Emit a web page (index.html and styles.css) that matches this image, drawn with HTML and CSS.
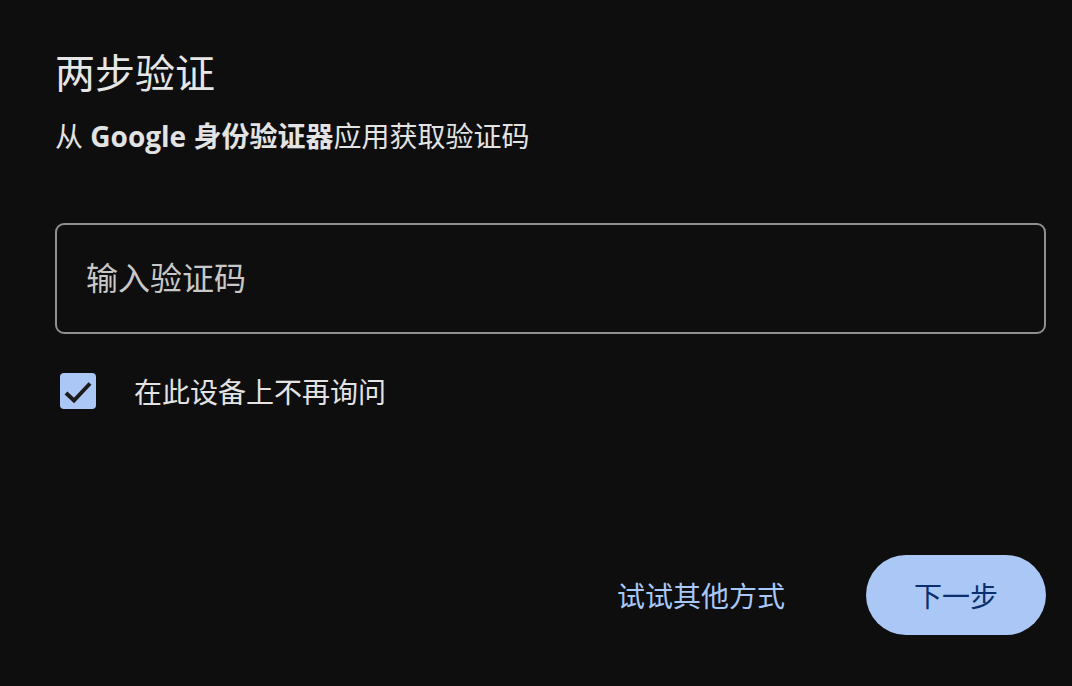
FILE: index.html
```html
<!DOCTYPE html>
<html lang="zh-CN">
<head>
    <meta charset="UTF-8">
    <meta name="viewport" content="width=device-width, initial-scale=1.0">
    <title>两步验证</title>
    <link rel="stylesheet" href="styles.css">
</head>
<body>
<div class="page">
    <h1 class="title">两步验证</h1>
    <p class="subtitle">从 <b>Google 身份验证器</b>应用获取验证码</p>

    <div class="code-field">
        <span class="placeholder">输入验证码</span>
    </div>

    <label class="remember">
        <span class="checkbox">
            <svg width="36" height="36" viewBox="0 0 36 36">
                <path d="M6 20 L14 27.5 L30 10.5" fill="none" stroke="#1c1c1c" stroke-width="4"/>
            </svg>
        </span>
        <span class="remember-text">在此设备上不再询问</span>
    </label>

    <div class="actions">
        <a class="link-btn">试试其他方式</a>
        <button class="next-btn">下一步</button>
    </div>
</div>
</body>
</html>
```

FILE: styles.css
```css
body {
    margin: 0;
    background-color: #0e0e0e;
    color: #e3e3e3;
    font-family: "Open Sans", "Noto Sans CJK SC", sans-serif;
}

.page {
    padding: 47px 26px 0 55px;
    display: flex;
    flex-direction: column;
}

.title {
    margin: 0;
    font-size: 40px;
    font-weight: 400;
    line-height: 52px;
    color: #e6e6e6;
}

.subtitle {
    margin: 19px 0 0 0;
    font-size: 28px;
    line-height: 36px;
    color: #e3e3e3;
}

.subtitle b {
    font-weight: 700;
}

.code-field {
    margin-top: 69px;
    width: 991px;
    height: 111px;
    border: 2px solid #8f8f8f;
    border-radius: 9px;
    display: flex;
    align-items: center;
    padding-left: 29px;
    box-sizing: border-box;
}

.placeholder {
    font-size: 32px;
    color: #c8c8c8;
    margin-bottom: 6px;
}

.remember {
    margin-top: 37px;
    margin-left: 5px;
    display: flex;
    align-items: center;
    gap: 38px;
}

.checkbox {
    width: 36px;
    height: 36px;
    border-radius: 4px;
    background-color: #abc7f6;
    display: flex;
}

.remember-text {
    font-size: 28px;
    color: #e3e3e3;
}

.actions {
    margin-top: 144px;
    display: flex;
    justify-content: flex-end;
    align-items: center;
}

.link-btn {
    font-size: 28px;
    color: #a8c7fa;
    margin-right: 81px;
    cursor: pointer;
}

.next-btn {
    width: 180px;
    height: 80px;
    border: none;
    border-radius: 40px;
    background-color: #abc7f6;
    color: #0b2f6e;
    font-family: "Open Sans", "Noto Sans CJK SC", sans-serif;
    font-size: 28px;
    cursor: pointer;
}
```
